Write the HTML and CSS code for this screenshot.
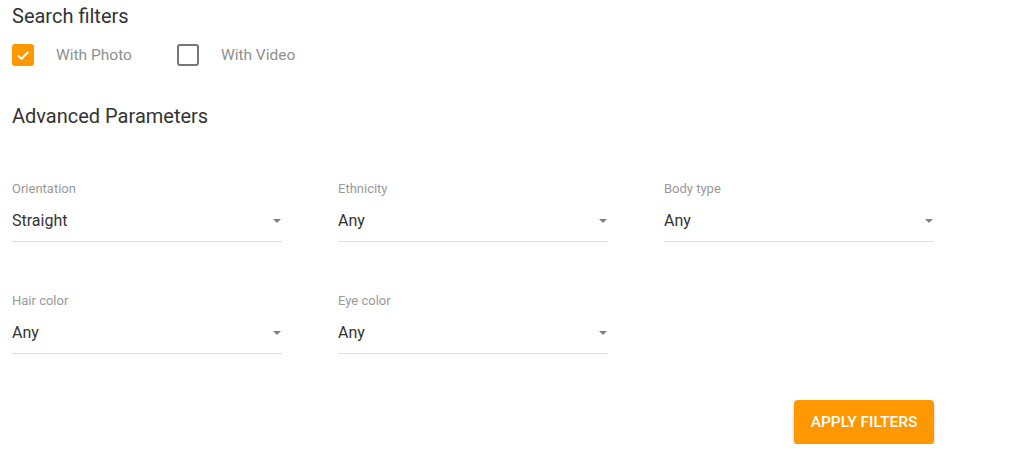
FILE: index.html
```html
<!DOCTYPE html>
<html lang="en">
<head>
  <meta charset="UTF-8" />
  <meta name="viewport" content="width=device-width, initial-scale=1.0"/>
  <title>Search filters</title>
  <link rel="stylesheet" href="styles.css">
</head>
<body>
  <div class="filters">
    <h2 class="title">Search filters</h2>

    <div class="checks">
      <label class="check">
        <span class="box checked">
          <svg viewBox="0 0 22 22" width="22" height="22"><path d="M6 11.5l3.4 3.4L16.2 8" fill="none" stroke="#fff" stroke-width="2"/></svg>
        </span>
        With Photo
      </label>
      <label class="check">
        <span class="box"></span>
        With Video
      </label>
    </div>

    <h2 class="title advanced">Advanced Parameters</h2>

    <div class="grid">
      <div class="field">
        <div class="label">Orientation</div>
        <div class="select">Straight<span class="arrow"></span></div>
      </div>
      <div class="field">
        <div class="label">Ethnicity</div>
        <div class="select">Any<span class="arrow"></span></div>
      </div>
      <div class="field">
        <div class="label">Body type</div>
        <div class="select">Any<span class="arrow"></span></div>
      </div>
      <div class="field">
        <div class="label">Hair color</div>
        <div class="select">Any<span class="arrow"></span></div>
      </div>
      <div class="field">
        <div class="label">Eye color</div>
        <div class="select">Any<span class="arrow"></span></div>
      </div>
      <div class="actions">
        <button class="apply">Apply filters</button>
      </div>
    </div>
  </div>
</body>
</html>
```

FILE: styles.css
```css
body {
  margin: 0;
  font-family: Roboto, "Liberation Sans", sans-serif;
  background: #fff;
  color: #333;
}

.filters {
  padding: 3px 12px 0;
  width: 922px;
}

.title {
  margin: 0;
  font-size: 20px;
  font-weight: 400;
  line-height: 26px;
  color: #333;
}

.title.advanced {
  margin-top: 37px;
}

.checks {
  display: flex;
  margin-top: 15px;
  gap: 45px;
}

.check {
  display: flex;
  align-items: center;
  gap: 22px;
  font-size: 15.5px;
  color: #8f8f8f;
  height: 22px;
}

.box {
  width: 22px;
  height: 22px;
  box-sizing: border-box;
  border: 2px solid #777;
  border-radius: 3px;
}

.box.checked {
  border: none;
  background: #ff9800;
}

.box svg {
  display: block;
}

.grid {
  display: grid;
  grid-template-columns: repeat(3, 270px);
  column-gap: 56px;
  row-gap: 51px;
  margin-top: 52px;
}

.label {
  font-size: 13px;
  line-height: 16px;
  color: #999;
}

.select {
  position: relative;
  margin-top: 12px;
  padding-bottom: 8px;
  font-size: 16px;
  line-height: 24px;
  color: #333;
  border-bottom: 1px solid #ddd;
}

.arrow {
  position: absolute;
  right: 1px;
  top: 10px;
  border-left: 4.5px solid transparent;
  border-right: 4.5px solid transparent;
  border-top: 4.5px solid #808080;
}

.actions {
  grid-column: 3;
  grid-row: 3;
  display: flex;
  justify-content: flex-end;
  margin-top: -5px;
}

.apply {
  width: 140px;
  height: 44px;
  border: none;
  border-radius: 4px;
  background: #ff9800;
  color: #fff;
  font-family: Roboto, "Liberation Sans", sans-serif;
  font-size: 15.5px;
  font-weight: 500;
  text-transform: uppercase;
  box-shadow: 0 2px 3px rgba(0, 0, 0, 0.25);
}
```
